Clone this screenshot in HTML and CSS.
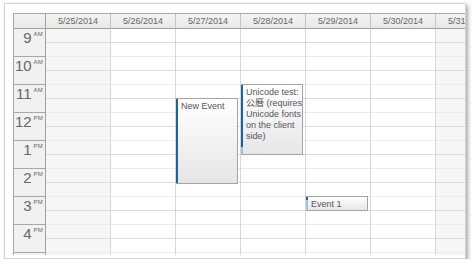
FILE: index.html
```html
<!DOCTYPE html>
<html>

<head>
    <title>Week calendar</title>
    <link rel="stylesheet" href="styles.css">
</head>

<body>
    <div class="card">
        <div class="scheduler">
            <div class="corner"></div>
            <div class="day-header">5/25/2014</div>
            <div class="day-header">5/26/2014</div>
            <div class="day-header">5/27/2014</div>
            <div class="day-header">5/28/2014</div>
            <div class="day-header">5/29/2014</div>
            <div class="day-header">5/30/2014</div>
            <div class="day-header">5/31/2014</div>

            <!-- hour labels -->
            <div class="hours">
                <div class="hour"><span class="num">9</span><span class="ampm">AM</span></div>
                <div class="hour"><span class="num">10</span><span class="ampm">AM</span></div>
                <div class="hour"><span class="num">11</span><span class="ampm">AM</span></div>
                <div class="hour"><span class="num">12</span><span class="ampm">PM</span></div>
                <div class="hour"><span class="num">1</span><span class="ampm">PM</span></div>
                <div class="hour"><span class="num">2</span><span class="ampm">PM</span></div>
                <div class="hour"><span class="num">3</span><span class="ampm">PM</span></div>
                <div class="hour"><span class="num">4</span><span class="ampm">PM</span></div>
                <div class="hour"></div>
            </div>

            <div class="day weekend"></div>
            <div class="day"></div>
            <div class="day">
                <div class="event" style="top: 69px; height: 86px; --done: 100%;">
                    <div class="bar"></div>
                    <div class="event-text">New Event</div>
                </div>
            </div>
            <div class="day">
                <div class="event" style="top: 55px; height: 71px; --done: 90%;">
                    <div class="bar"></div>
                    <div class="event-text">Unicode test: 公曆 (requires Unicode fonts on the client side)</div>
                </div>
            </div>
            <div class="day">
                <div class="event" style="top: 167px; height: 15px; --done: 20%;">
                    <div class="bar"></div>
                    <div class="event-text">Event 1</div>
                </div>
            </div>
            <div class="day"></div>
            <div class="day weekend"></div>
        </div>
    </div>

    <script>
        // half-hour cells for each day column
        var days = document.querySelectorAll('.day');
        for (var i = 0; i < days.length; i++) {
            for (var j = 0; j < 18; j++) {
                var slot = document.createElement('div');
                slot.className = j % 2 == 0 ? 'slot half' : 'slot';
                days[i].insertBefore(slot, days[i].firstChild);
            }
        }
    </script>
</body>

</html>
```

FILE: styles.css
```css
/* Page */
body {
    margin: 0;
    padding: 0;
    background: #ffffff;
    font-family: "Liberation Sans", Arial, "Noto Sans CJK SC", sans-serif;
}

.card {
    margin: 3px 0 0 4px;
    width: 452px;
    height: 244px;
    border: 1px solid #d4d4d4;
    box-shadow: 2px 2px 4px rgba(0, 0, 0, 0.35);
    padding: 9px 0 1px 8px;
    overflow: hidden;
}

/* Grid */
.scheduler {
    display: grid;
    grid-template-columns: 32px repeat(7, 65px);
    grid-template-rows: 15px auto;
    height: 242px;
    width: 487px;
    overflow: hidden;
    border-top: 1px solid #a8a8a8;
    border-left: 1px solid #a8a8a8;
    box-sizing: border-box;
}

.corner,
.day-header {
    background: linear-gradient(#f4f4f4, #e8e8e8);
    border-right: 1px solid #c3c3c3;
    border-bottom: 1px solid #a0a0a0;
    box-sizing: border-box;
}

.corner {
    border-right: 1px solid #a0a0a0;
}

.day-header {
    color: #666666;
    font-size: 9px;
    text-align: center;
    line-height: 14px;
    white-space: nowrap;
}

.hours {
    display: flex;
    flex-direction: column;
}

.hour {
    flex: 0 0 28px;
    height: 28px;
    box-sizing: border-box;
    background: #f1f1f1;
    border-right: 1px solid #a0a0a0;
    border-bottom: 1px solid #a8a8a8;
    display: flex;
    justify-content: flex-end;
    padding: 2px 2px 0 0;
    color: #666666;
}

.num {
    font-size: 15px;
    line-height: 13px;
}

.ampm {
    font-size: 6px;
    line-height: 7px;
    margin-left: 2px;
    letter-spacing: 0.2px;
}

.day {
    position: relative;
    display: flex;
    flex-direction: column;
    border-right: 1px solid #d6d6d6;
    box-sizing: border-box;
}

.weekend {
    background: #f6f6f6;
}

.slot {
    flex: 0 0 14px;
    height: 14px;
    box-sizing: border-box;
    border-bottom: 1px solid #dcdcdc;
}

.slot.half {
    border-bottom: 1px solid #ececec;
}

/* Events */
.event {
    position: absolute;
    left: 0;
    width: 62px;
    box-sizing: border-box;
    border: 1px solid #a4a4a4;
    border-left: none;
    background: linear-gradient(#ffffff, #e6e6e6);
    display: flex;
    overflow: hidden;
}

.bar {
    flex: 0 0 2px;
    background: linear-gradient(#1565a8 0, #1565a8 var(--done), #9cc4e8 var(--done));
}

.event-text {
    color: #555555;
    font-size: 9px;
    line-height: 11px;
    padding: 2px 0 0 3px;
}
```
